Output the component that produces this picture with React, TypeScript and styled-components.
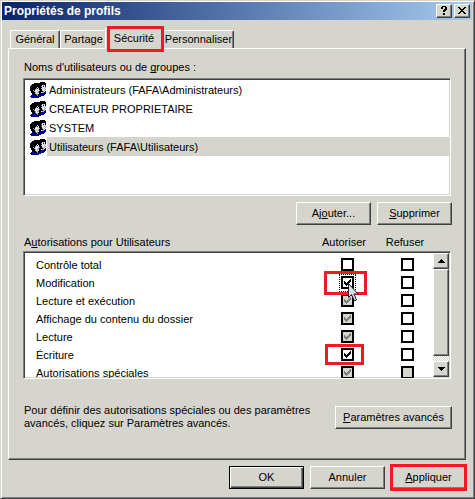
import React from "react";
import styled, { createGlobalStyle, css } from "styled-components";

const face = "#d6d5cd";
const shadow = "#808080";
const dark = "#404040";
const red = "#ed1c24";

const GlobalStyle = createGlobalStyle`
  *, *::before, *::after { box-sizing: border-box; }
  body {
    margin: 0;
    background: ${face};
    color: #000;
    font: 11px/13px "Liberation Sans", Arial, sans-serif;
  }
  button, input { font: inherit; color: inherit; margin: 0; }
  u { text-decoration-skip-ink: none; text-underline-offset: 1px; }
`;

const raised = css`
  border: 1px solid;
  border-color: #fff ${dark} ${dark} #fff;
  box-shadow: inset -1px -1px 0 ${shadow};
`;

const Dialog = styled.main`
  display: flex;
  flex-direction: column;
  background: ${face};
  border: 1px solid;
  border-color: ${face} ${dark} ${dark} ${face};
  box-shadow: inset 1px 1px 0 #fff, inset -1px -1px 0 ${shadow};
  padding: 1px 2px 9px 1px;
`;

const TitleBar = styled.header`
  display: flex;
  align-items: center;
  height: 18px;
  padding: 0 2px;
  background: linear-gradient(90deg, #0a246a, #a6caf0);
  color: #fff;
`;

const Title = styled.h1`
  flex: 1;
  margin: 0;
  font: bold 12px/13px "Liberation Sans", Arial, sans-serif;
`;

const CaptionButton = styled.button`
  ${raised}
  display: grid;
  place-items: center;
  width: 16px;
  height: 14px;
  margin-left: 2px;
  padding: 0 1px 1px 0;
  background: ${face};
`;

const Body = styled.div`
  padding: 8px 6px 0;
`;

const Tabs = styled.div`
  display: flex;
  align-items: flex-end;
  height: 20px;
  padding: 0 2px;
`;

const Tab = styled.button<{ $width: number; $active?: boolean }>`
  position: relative;
  width: ${(p) => p.$width}px;
  height: ${(p) => (p.$active ? 21 : 18)}px;
  margin: ${(p) => (p.$active ? "0 0 -1px -2px" : "0")};
  padding: 0 0 ${(p) => (p.$active ? 2 : 0)}px;
  border: 1px solid;
  border-color: #fff ${dark} transparent #fff;
  border-bottom: 0;
  border-radius: 2px 2px 0 0;
  box-shadow: inset -1px 0 0 ${shadow};
  background: ${face};
  white-space: nowrap;
`;

const Highlight = styled.span<{ $inset: string }>`
  position: absolute;
  inset: ${(p) => p.$inset};
  border: 3px solid ${red};
  pointer-events: none;
  z-index: 1;
`;

const Panel = styled.section`
  ${raised}
  padding: 12px 13px 29px 14px;
`;

const Caption = styled.div`
  height: 17px;
  padding-left: 1px;
`;

const Sunken = styled.div<{ $height: number }>`
  height: ${(p) => p.$height}px;
  margin-right: 1px;
  border: 1px solid;
  border-color: ${shadow} #fff #fff ${shadow};
  box-shadow: inset 1px 1px 0 ${dark}, inset -1px -1px 0 ${face};
  background: #fff;
  overflow: hidden;
`;

const Principals = styled.ul`
  margin: 0;
  padding: 1px 1px 0 6px;
  list-style: none;
`;

const Principal = styled.li<{ $selected?: boolean }>`
  display: flex;
  align-items: center;
  height: 19px;
  svg { flex: none; }
  span {
    flex: 1;
    margin-left: 1px;
    padding: 4px 2px 2px;
    background: ${(p) => (p.$selected ? face : "transparent")};
  }
`;

const ButtonRow = styled.div`
  display: flex;
  justify-content: flex-end;
  gap: 6px;
  margin-top: 6px;
`;

const PushButton = styled.button<{ $wide?: boolean; $default?: boolean }>`
  ${raised}
  position: relative;
  flex: none;
  width: ${(p) => (p.$wide ? 117 : 75)}px;
  height: 23px;
  padding: 0;
  background: ${face};
  ${(p) =>
    p.$default &&
    css`
      border-color: #000;
      box-shadow: inset 1px 1px 0 #fff, inset -1px -1px 0 ${dark}, inset -2px -2px 0 ${shadow};
    `}
`;

const PermissionHeader = styled.div`
  display: grid;
  grid-template-columns: 1fr 62px 60px 17px;
  height: 15px;
  margin-top: 11px;
  padding-left: 1px;
  span + span { text-align: center; }
`;

const PermissionBox = styled(Sunken)`
  display: flex;
  padding: 1px;
`;

const PermissionTable = styled.table`
  flex: 1;
  align-self: flex-start;
  table-layout: fixed;
  border-collapse: collapse;
  margin-top: 3px;
  th { padding: 0 0 0 11px; text-align: left; font-weight: normal; }
  td { position: relative; width: 69px; padding: 0; }
  td:last-child { width: 51px; }
  tr { height: 18px; }
`;

const Box = styled.input`
  appearance: none;
  display: block;
  width: 13px;
  height: 13px;
  margin: 0 auto;
  border: 2px solid #000;
  background: #fff;
  &:disabled { background: ${face}; }
`;

const CheckCell = styled.span<{ $focus?: boolean }>`
  position: relative;
  display: block;
  width: 17px;
  height: 18px;
  margin: 0 auto;
  padding: 2px 0;
  outline: ${(p) => (p.$focus ? "1px dotted #000" : "none")};
  outline-offset: -1px;
  svg { position: absolute; left: 5px; top: 5px; pointer-events: none; }
`;

const Pointer = styled.svg`
  position: absolute;
  left: 35px;
  top: 9px;
  z-index: 2;
`;

const ScrollBar = styled.div`
  display: flex;
  flex-direction: column;
  width: 16px;
  background: repeating-conic-gradient(#fff 0 25%, ${face} 0 50%) 0 0 / 2px 2px;
`;

const ScrollButton = styled.button`
  ${raised}
  display: grid;
  place-items: center;
  height: 16px;
  padding: 0;
  background: ${face};
`;

const Thumb = styled.div`
  ${raised}
  flex: 1;
  margin-bottom: 5px;
  background: ${face};
`;

const Advanced = styled.div`
  display: flex;
  align-items: center;
  justify-content: space-between;
  margin-top: 25px;
  padding-left: 1px;
  p { margin: 0; max-width: 300px; }
`;

const Footer = styled.footer`
  display: flex;
  justify-content: flex-end;
  gap: 6px;
  padding-top: 6px;
`;

const facesRows = [
  "..........kkkkk.",
  "....kkkkkkkkkkkk",
  "..kkkkkkkkkkkkkk",
  ".kkkkkkkkkkkwgwk",
  "kkkkkkkkkkkgwbwk",
  "kkkkkkkwkkkkwwwg",
  "kkkkkkgbwkkgwwgw",
  "kkkkkgwwwkkkwwwg",
  "kkkgkwwwwgkkgwg.",
  ".kkkgwwwgkkkkgwb",
  ".kkkkgwggkk.ggbb",
  "..kkkgwwwkkbbbbb",
  "..bkkkggkkbbbbb.",
  ".bbbbkkgkbbbbb..",
  "bbbbbbbbbbb.....",
  ".bbbbbbbb.......",
];
const facesInk: Record<string, string> = { k: "#000", w: "#e8e8e8", g: "#a0a0a4", b: "#0000a0" };

const GroupIcon = () => (
  <svg width="16" height="16" viewBox="0 0 16 16" shapeRendering="crispEdges" aria-hidden="true">
    {Object.entries(facesInk).map(([key, fill]) => (
      <path
        key={key}
        fill={fill}
        d={facesRows
          .flatMap((row, y) => [...row].map((c, x) => (c === key ? `M${x} ${y}h1v1h-1z` : "")))
          .join("")}
      />
    ))}
  </svg>
);

const Tick = ({ color }: { color: string }) => (
  <svg width="7" height="7" viewBox="0 0 7 7" shapeRendering="crispEdges" aria-hidden="true">
    <path fill={color} d="M0 2h1v1h1v1h1v-1h1v-1h1v-1h1v-1h1v3h-1v1h-1v1h-1v1h-1v1h-1v-1h-1v-1h-1z" />
  </svg>
);

const Arrow = ({ down }: { down?: boolean }) => (
  <svg width="7" height="4" viewBox="0 0 7 4" shapeRendering="crispEdges" aria-hidden="true">
    <path d={down ? "M0 0h7v1h-1v1h-1v1h-1v1h-1v-1h-1v-1h-1v-1h-1z" : "M3 0h1v1h1v1h1v1h1v1h-7v-1h1v-1h1v-1h1z"} />
  </svg>
);

const principals = [
  "Administrateurs (FAFA\\Administrateurs)",
  "CREATEUR PROPRIETAIRE",
  "SYSTEM",
  "Utilisateurs (FAFA\\Utilisateurs)",
];

type Permission = {
  name: string;
  allow?: boolean;
  inherited?: boolean;
  denyOff?: boolean;
  focus?: boolean;
  mark?: string;
};

const permissions: Permission[] = [
  { name: "Contrôle total" },
  { name: "Modification", allow: true, focus: true, mark: "-3px 15px -3px 11px" },
  { name: "Lecture et exécution", allow: true, inherited: true },
  { name: "Affichage du contenu du dossier", allow: true, inherited: true },
  { name: "Lecture", allow: true, inherited: true },
  { name: "Écriture", allow: true, mark: "-2px 18px -1px 12px" },
  { name: "Autorisations spéciales", allow: true, inherited: true, denyOff: true },
];

export default function App() {
  return (
    <>
      <GlobalStyle />
      <Dialog>
        <TitleBar>
          <Title>Propriétés de profils</Title>
          <CaptionButton aria-label="Aide">
            <svg width="6" height="9" viewBox="0 0 6 9" shapeRendering="crispEdges">
              <path d="M1 0h4v1h1v3h-1v1h-1v1h-2v-2h1v-1h1v-2h-2v2h-2v-2h1zM2 7h2v2h-2z" />
            </svg>
          </CaptionButton>
          <CaptionButton aria-label="Fermer">
            <svg width="8" height="7" viewBox="0 0 8 7" shapeRendering="crispEdges">
              <path d="M0 0h2v1h1v1h2v-1h1v-1h2v1h-1v1h-1v1h-1v1h1v1h1v1h1v1h-2v-1h-1v-1h-2v1h-1v1h-2v-1h1v-1h1v-1h1v-1h-1v-1h-1v-1h-1z" />
            </svg>
          </CaptionButton>
        </TitleBar>
        <Body>
          <Tabs role="tablist">
            <Tab role="tab" $width={50}>Général</Tab>
            <Tab role="tab" $width={47}>Partage</Tab>
            <Tab role="tab" aria-selected="true" $width={58} $active>
              Sécurité
              <Highlight $inset="-3px -2px -3px 1px" />
            </Tab>
            <Tab role="tab" $width={71}>Personnaliser</Tab>
          </Tabs>
          <Panel>
            <Caption id="principals">
              Noms d'utilisateurs ou de <u>g</u>roupes :
            </Caption>
            <Sunken $height={118}>
              <Principals role="listbox" aria-labelledby="principals">
                {principals.map((name, i) => (
                  <Principal key={name} role="option" aria-selected={i === 3} $selected={i === 3}>
                    <GroupIcon />
                    <span>{name}</span>
                  </Principal>
                ))}
              </Principals>
            </Sunken>
            <ButtonRow>
              <PushButton>Aj<u>o</u>uter...</PushButton>
              <PushButton><u>S</u>upprimer</PushButton>
            </ButtonRow>
            <PermissionHeader>
              <span id="permissions">A<u>u</u>torisations pour Utilisateurs</span>
              <span>Autoriser</span>
              <span>Refuser</span>
            </PermissionHeader>
            <PermissionBox $height={128}>
              <PermissionTable aria-labelledby="permissions">
                <tbody>
                  {permissions.map((p) => (
                    <tr key={p.name}>
                      <th scope="row">{p.name}</th>
                      <td>
                        <CheckCell $focus={p.focus}>
                          <Box
                            type="checkbox"
                            aria-label={`Autoriser ${p.name}`}
                            defaultChecked={p.allow}
                            disabled={p.inherited}
                          />
                          {p.allow && <Tick color={p.inherited ? shadow : "#000"} />}
                        </CheckCell>
                        {p.mark && <Highlight $inset={p.mark} />}
                        {p.focus && (
                          <Pointer width="12" height="19" viewBox="0 0 12 19" aria-hidden="true">
                            <path d="M.5.5v14l3-3 3 6.500 2-1-2.500-6h4z" fill="#dcdce4" stroke="#223" />
                          </Pointer>
                        )}
                      </td>
                      <td>
                        <CheckCell>
                          <Box type="checkbox" aria-label={`Refuser ${p.name}`} disabled={p.denyOff} />
                        </CheckCell>
                      </td>
                    </tr>
                  ))}
                </tbody>
              </PermissionTable>
              <ScrollBar>
                <ScrollButton aria-label="Défiler vers le haut"><Arrow /></ScrollButton>
                <Thumb />
                <ScrollButton aria-label="Défiler vers le bas"><Arrow down /></ScrollButton>
              </ScrollBar>
            </PermissionBox>
            <Advanced>
              <p>Pour définir des autorisations spéciales ou des paramètres avancés, cliquez sur Paramètres avancés.</p>
              <PushButton $wide><u>P</u>aramètres avancés</PushButton>
            </Advanced>
          </Panel>
          <Footer>
            <PushButton $default>OK</PushButton>
            <PushButton>Annuler</PushButton>
            <PushButton>
              <u>A</u>ppliquer
              <Highlight $inset="-3px -2px" />
            </PushButton>
          </Footer>
        </Body>
      </Dialog>
    </>
  );
}
